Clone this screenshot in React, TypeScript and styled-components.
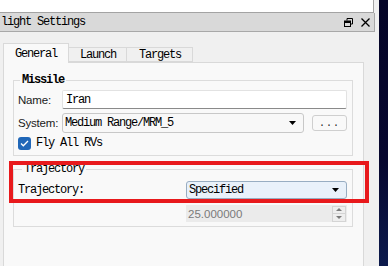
import styled, { createGlobalStyle } from 'styled-components';

const mono = `"Liberation Mono", "DejaVu Sans Mono", monospace`;
const sans = `"Liberation Sans", Arial, sans-serif`;

const GlobalStyle = createGlobalStyle`
  html, body {
    margin: 0;
    padding: 0;
    width: 388px;
    height: 266px;
    overflow: hidden;
    background: #f0f0f0;
  }
  #root {
    height: 266px;
  }
  * {
    box-sizing: border-box;
  }
`;

function RestoreIcon() {
  return (
    <svg width="9" height="9" viewBox="0 0 9 9">
      <path d="M3 0.5h5.5v5.5" fill="none" stroke="#000" strokeWidth="1" />
      <path d="M3 0.5v2M8.5 6h-2" fill="none" stroke="#000" strokeWidth="1" />
      <rect x="0.5" y="3" width="6" height="5.5" fill="none" stroke="#000" strokeWidth="1" />
      <rect x="0.5" y="3" width="6" height="2" fill="#000" />
    </svg>
  );
}

function CloseIcon() {
  return (
    <svg width="9" height="9" viewBox="0 0 9 9">
      <path d="M0.5 0.5L8.5 8.5M8.5 0.5L0.5 8.5" stroke="#000" strokeWidth="1.3" />
    </svg>
  );
}

function ComboArrow() {
  return (
    <svg width="7" height="4" viewBox="0 0 7 4">
      <path d="M0 0h7L3.5 4z" fill="#000" />
    </svg>
  );
}

function SpinArrow({ up }: { up?: boolean }) {
  return (
    <svg width="6" height="3" viewBox="0 0 6 3">
      <path d={up ? 'M0 3h6L3 0z' : 'M0 0h6L3 3z'} fill="#7a7a7a" />
    </svg>
  );
}

function CheckMark() {
  return (
    <svg width="9" height="7" viewBox="0 0 9 7">
      <path d="M1 3.5l2.3 2.3L8 1" fill="none" stroke="#fff" strokeWidth="1.3" />
    </svg>
  );
}

export default function App() {
  return (
    <Screen>
      <GlobalStyle />
      <Main>
        <TopStrip />
        <TitleBar>
          <TitleText>light Settings</TitleText>
          <TitleButtons>
            <RestoreIcon />
            <CloseIcon />
          </TitleButtons>
        </TitleBar>
        <DockBody>
          <TabBar>
            <Tab active>General</Tab>
            <Tab>Launch</Tab>
            <Tab>Targets</Tab>
          </TabBar>
          <Pane>
            <GroupBox>
              <Legend bold>Missile</Legend>
              <FormRow>
                <Label>Name:</Label>
                <TextInput>Iran</TextInput>
              </FormRow>
              <FormRow gap={4}>
                <Label>System:</Label>
                <Combo width={242}>
                  <span>Medium Range/MRM_5</span>
                  <ComboArrow />
                </Combo>
                <DotsButton>...</DotsButton>
              </FormRow>
              <CheckRow>
                <CheckBox>
                  <CheckMark />
                </CheckBox>
                <MonoText>Fly All RVs</MonoText>
              </CheckRow>
            </GroupBox>
            <GroupBox second>
              <Legend>Trajectory</Legend>
              <FormRow>
                <MonoLabel>Trajectory:</MonoLabel>
                <Combo width={161} highlighted>
                  <span>Specified</span>
                  <ComboArrow />
                </Combo>
              </FormRow>
              <SpinRow>
                <SpinBox>
                  <span>25.000000</span>
                  <SpinButtons>
                    <SpinHalf>
                      <SpinArrow up />
                    </SpinHalf>
                    <SpinHalf>
                      <SpinArrow />
                    </SpinHalf>
                  </SpinButtons>
                </SpinBox>
              </SpinRow>
            </GroupBox>
          </Pane>
        </DockBody>
      </Main>
      <NavyStrip />
      <Highlight />
    </Screen>
  );
}

const Screen = styled.div`
  position: relative;
  display: flex;
  width: 388px;
  height: 266px;
`;

const Main = styled.div`
  width: 379px;
  display: flex;
  flex-direction: column;
`;

const TopStrip = styled.div`
  width: 374px;
  height: 13px;
  background: #ffffff;
  border-right: 1px solid #a3a3a3;
  border-bottom: 1px solid #a3a3a3;
`;

const TitleBar = styled.div`
  width: 375px;
  height: 19px;
  display: flex;
  align-items: center;
  justify-content: space-between;
  background: #d9d9d9;
  border-right: 1px solid #a8a8a8;
  border-bottom: 1px solid #a8a8a8;
  padding: 0 4px 0 1px;
`;

const TitleText = styled.span`
  font-family: ${mono};
  font-size: 12px;
  letter-spacing: -1.2px;
  color: #000;
`;

const TitleButtons = styled.div`
  display: flex;
  align-items: center;
  gap: 8px;
  padding-top: 1px;
`;

const DockBody = styled.div`
  flex: 1;
  display: flex;
  flex-direction: column;
  padding: 11px 0 0 3px;
`;

const TabBar = styled.div`
  display: flex;
  align-items: flex-end;
  height: 19px;
`;

const Tab = styled.div<{ active?: boolean }>`
  position: relative;
  height: ${({ active }) => (active ? '20px' : '15px')};
  margin-bottom: ${({ active }) => (active ? '-1px' : '0')};
  padding: 0 11px;
  display: flex;
  align-items: center;
  padding-top: ${({ active }) => (active ? '0' : '1px')};
  font-family: ${mono};
  font-size: 12px;
  letter-spacing: -1.2px;
  color: #000;
  background: ${({ active }) => (active ? '#f9f9f9' : '#f0f0f0')};
  border: 1px solid #d9d9d9;
  border-bottom: ${({ active }) => (active ? 'none' : '1px solid #d9d9d9')};
  border-left: ${({ active }) => (active ? '1px solid #d9d9d9' : 'none')};
  z-index: ${({ active }) => (active ? 1 : 0)};
  &:first-child {
    width: 66px;
  }
  &:nth-child(2) {
    width: 58px;
  }
  &:nth-child(3) {
    width: 66px;
    padding-left: 12px;
  }
`;

const Pane = styled.div`
  width: 361px;
  flex: 1;
  background: #f9f9f9;
  border: 1px solid #d9d9d9;
  border-bottom: none;
  padding: 11px 10px 0 9px;
`;

const GroupBox = styled.fieldset<{ second?: boolean }>`
  margin: ${({ second }) => (second ? '7px 0 0 0' : '0')};
  padding: ${({ second }) => (second ? '6px 4px 4px 4px' : '4px 4px 5px 4px')};
  min-width: 0;
  border: 1px solid #dcdcdc;
  display: flex;
  flex-direction: column;
`;

const Legend = styled.legend<{ bold?: boolean }>`
  padding: 0 2px;
  margin-left: ${({ bold }) => (bold ? '2px' : '4px')};
  font-family: ${mono};
  font-size: 12px;
  line-height: 12px;
  letter-spacing: -1.2px;
  font-weight: ${({ bold }) => (bold ? 700 : 400)};
  color: #000;
`;

const FormRow = styled.div<{ gap?: number }>`
  display: flex;
  align-items: center;
  margin-top: ${({ gap }) => (gap ? `${gap}px` : '0')};
`;

const Label = styled.span`
  width: 44px;
  font-family: ${sans};
  font-size: 11.5px;
  letter-spacing: -0.2px;
  color: #1a1a1a;
`;

const MonoLabel = styled.span`
  width: 168px;
  font-family: ${mono};
  font-size: 12px;
  letter-spacing: -1.2px;
  color: #000;
`;

const MonoText = styled.span`
  font-family: ${mono};
  font-size: 12px;
  letter-spacing: -1.2px;
  color: #000;
`;

const TextInput = styled.div`
  width: 285px;
  height: 19px;
  display: flex;
  align-items: center;
  padding-left: 3px;
  background: #ffffff;
  border: 1px solid #e2e2e2;
  border-bottom: 1px solid #8a8a8a;
  border-radius: 2px;
  font-family: ${mono};
  font-size: 12px;
  letter-spacing: -1.2px;
  color: #000;
`;

const Combo = styled.div<{ width: number; highlighted?: boolean }>`
  width: ${({ width }) => width}px;
  height: ${({ highlighted }) => (highlighted ? '18px' : '20px')};
  display: flex;
  align-items: center;
  justify-content: space-between;
  padding: 0 7px 0 2px;
  background: ${({ highlighted }) => (highlighted ? '#e9f1fa' : '#f8f8f8')};
  border: 1px solid ${({ highlighted }) => (highlighted ? '#98adc2' : '#c8c8c8')};
  border-radius: 3px;
  font-family: ${mono};
  font-size: 12px;
  letter-spacing: -1.2px;
  color: #000;
`;

const DotsButton = styled.div`
  width: 35px;
  height: 16px;
  margin-left: 8px;
  display: flex;
  align-items: center;
  justify-content: center;
  background: #f9f9f9;
  border: 1px solid #cfcfcf;
  border-radius: 3px;
  font-family: ${mono};
  font-size: 10px;
  letter-spacing: 1px;
  color: #222;
`;

const CheckRow = styled.div`
  display: flex;
  align-items: center;
  gap: 5px;
  margin-top: 3px;
  height: 14px;
`;

const CheckBox = styled.div`
  width: 13px;
  height: 13px;
  display: flex;
  align-items: center;
  justify-content: center;
  background: #2067b8;
  border-radius: 3px;
`;

const SpinRow = styled.div`
  display: flex;
  padding-left: 168px;
  margin-top: 6px;
`;

const SpinBox = styled.div`
  width: 161px;
  height: 17px;
  display: flex;
  align-items: center;
  justify-content: space-between;
  padding: 0 1px 0 2px;
  background: #ebebeb;
  font-family: ${sans};
  font-size: 11.5px;
  color: #7a7a7a;
`;

const SpinButtons = styled.div`
  width: 14px;
  height: 16px;
  display: flex;
  flex-direction: column;
  border: 1px solid #d4d4d4;
`;

const SpinHalf = styled.div`
  flex: 1;
  display: flex;
  align-items: center;
  justify-content: center;
  background: #eeeeee;
  &:first-child {
    border-bottom: 1px solid #d4d4d4;
  }
`;

const NavyStrip = styled.div`
  flex: 1;
  background: linear-gradient(180deg, #050527 0%, #07072f 60%, #0c1a4c 100%);
`;

const Highlight = styled.div`
  position: absolute;
  left: 9px;
  top: 161px;
  width: 360px;
  height: 42px;
  border: 4px solid #e8191c;
  pointer-events: none;
`;
